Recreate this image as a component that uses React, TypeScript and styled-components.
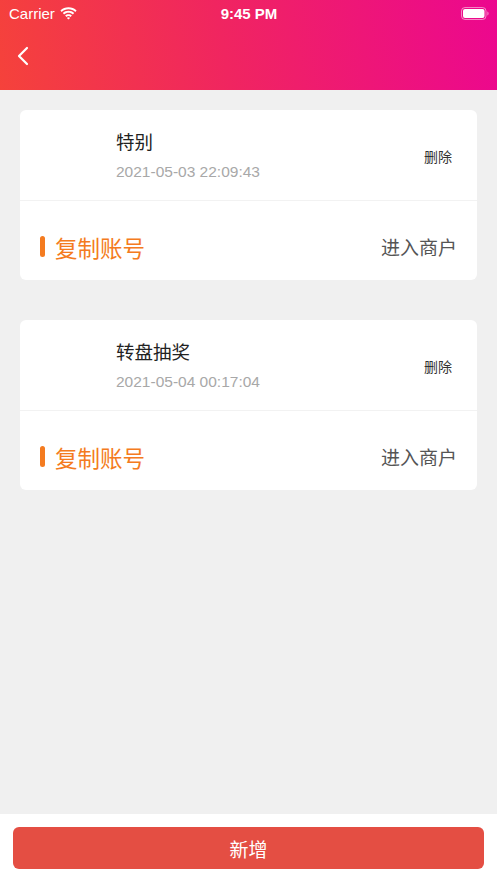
import styled, { createGlobalStyle } from "styled-components";

const GlobalStyle = createGlobalStyle`
  html, body {
    margin: 0;
    padding: 0;
    background: #f0f0f0;
  }
  body {
    font-family: "Liberation Sans", "Noto Sans CJK SC", sans-serif;
  }
`;

type Shop = {
  name: string;
  time: string;
};

const shops: Shop[] = [
  { name: "特别", time: "2021-05-03 22:09:43" },
  { name: "转盘抽奖", time: "2021-05-04 00:17:04" },
];

const Page = styled.div`
  display: flex;
  flex-direction: column;
  width: 497px;
  height: 883px;
  background: #f0f0f0;
`;

const Header = styled.header`
  height: 90px;
  background: linear-gradient(80deg, #f5423b 0%, #f02560 45%, #ec078f 100%);
  color: #fff;
  display: flex;
  flex-direction: column;
`;

const StatusBar = styled.div`
  height: 26px;
  display: grid;
  grid-template-columns: 1fr auto 1fr;
  align-items: center;
  padding: 0 8px 0 9px;
  font-size: 15px;
`;

const Carrier = styled.div`
  display: flex;
  align-items: center;
  gap: 5px;
`;

const Clock = styled.div`
  font-weight: 700;
  font-size: 15px;
`;

const Battery = styled.div`
  justify-self: end;
  display: flex;
  align-items: center;
`;

const NavBar = styled.div`
  flex: 1;
  display: flex;
  align-items: center;
  padding-left: 16px;
  padding-bottom: 4px;
`;

const List = styled.main`
  flex: 1;
  display: flex;
  flex-direction: column;
  gap: 40px;
  padding: 20px 20px 0;
`;

const Card = styled.section`
  background: #fff;
  border-radius: 6px;
  overflow: hidden;
`;

const CardTop = styled.div`
  height: 91px;
  display: flex;
  align-items: center;
  padding: 0 25px 0 96px;
  border-bottom: 1px solid #f2f2f2;
  box-sizing: border-box;
`;

const Info = styled.div`
  flex: 1;
  display: flex;
  flex-direction: column;
  gap: 7px;
  padding-top: 2px;
`;

const Name = styled.div`
  font-size: 18.5px;
  color: #222;
  line-height: 24px;
`;

const Time = styled.div`
  font-size: 15.5px;
  color: #a8a8a8;
  line-height: 20px;
`;

const Delete = styled.div`
  font-size: 14px;
  color: #333;
  padding-top: 2px;
`;

const CardBottom = styled.div`
  height: 79px;
  display: flex;
  align-items: center;
  justify-content: space-between;
  padding: 12px 20px 0;
  box-sizing: border-box;
`;

const Copy = styled.div`
  display: flex;
  align-items: center;
  gap: 10px;
  font-size: 22.5px;
  color: #f47b20;
`;

const Mark = styled.span`
  width: 5px;
  height: 21px;
  border-radius: 3px;
  background: #f47b20;
`;

const Enter = styled.div`
  font-size: 19px;
  color: #555;
`;

const Footer = styled.footer`
  height: 69px;
  background: #fff;
  padding: 13px 13px 0;
  box-sizing: border-box;
`;

const AddButton = styled.button`
  width: 100%;
  height: 42px;
  border: none;
  border-radius: 6px;
  background: #e44e43;
  color: #fff;
  font-family: inherit;
  font-size: 19px;
`;

export default function App() {
  return (
    <Page>
      <GlobalStyle />
      <Header>
        <StatusBar>
          <Carrier>
            Carrier
            <svg width="17" height="13" viewBox="0 0 17 13">
              <path d="M8.5 2.2c2.6 0 5 1 6.8 2.7l1.3-1.4C14.4 1.5 11.6.3 8.5.3S2.6 1.5.4 3.5l1.3 1.4C3.5 3.2 5.9 2.2 8.5 2.2z" fill="#fff" />
              <path d="M8.5 5.7c1.7 0 3.2.6 4.4 1.7l1.3-1.4C12.7 4.6 10.7 3.8 8.5 3.8S4.3 4.6 2.8 6l1.3 1.4c1.2-1.1 2.7-1.7 4.4-1.7z" fill="#fff" />
              <path d="M8.5 9.1c.8 0 1.5.3 2 .8l1.4-1.4C11 7.7 9.8 7.2 8.5 7.2S6 7.7 5.1 8.5l1.4 1.4c.5-.5 1.2-.8 2-.8z" fill="#fff" />
              <path d="M8.5 12.6l1.6-1.6c-.4-.4-1-.7-1.6-.7s-1.2.3-1.6.7z" fill="#fff" />
            </svg>
          </Carrier>
          <Clock>9:45 PM</Clock>
          <Battery>
            <svg width="28" height="13" viewBox="0 0 28 13">
              <rect x="0.5" y="0.5" width="24.5" height="12" rx="3.5" fill="none" stroke="#fff" strokeOpacity="0.5" />
              <rect x="2" y="2" width="21.5" height="9" rx="2" fill="#fff" />
              <path d="M26.3 4.5v4c.8-.3 1.3-1.1 1.3-2s-.5-1.7-1.3-2z" fill="#fff" fillOpacity="0.5" />
            </svg>
          </Battery>
        </StatusBar>
        <NavBar>
          <svg width="14" height="20" viewBox="0 0 14 20">
            <path d="M11 2 3 10l8 8" fill="none" stroke="#fff" strokeWidth="2.2" strokeLinecap="round" strokeLinejoin="round" />
          </svg>
        </NavBar>
      </Header>
      <List>
        {shops.map((s) => (
          <Card key={s.time}>
            <CardTop>
              <Info>
                <Name>{s.name}</Name>
                <Time>{s.time}</Time>
              </Info>
              <Delete>删除</Delete>
            </CardTop>
            <CardBottom>
              <Copy>
                <Mark />
                复制账号
              </Copy>
              <Enter>进入商户</Enter>
            </CardBottom>
          </Card>
        ))}
      </List>
      <Footer>
        <AddButton>新增</AddButton>
      </Footer>
    </Page>
  );
}
